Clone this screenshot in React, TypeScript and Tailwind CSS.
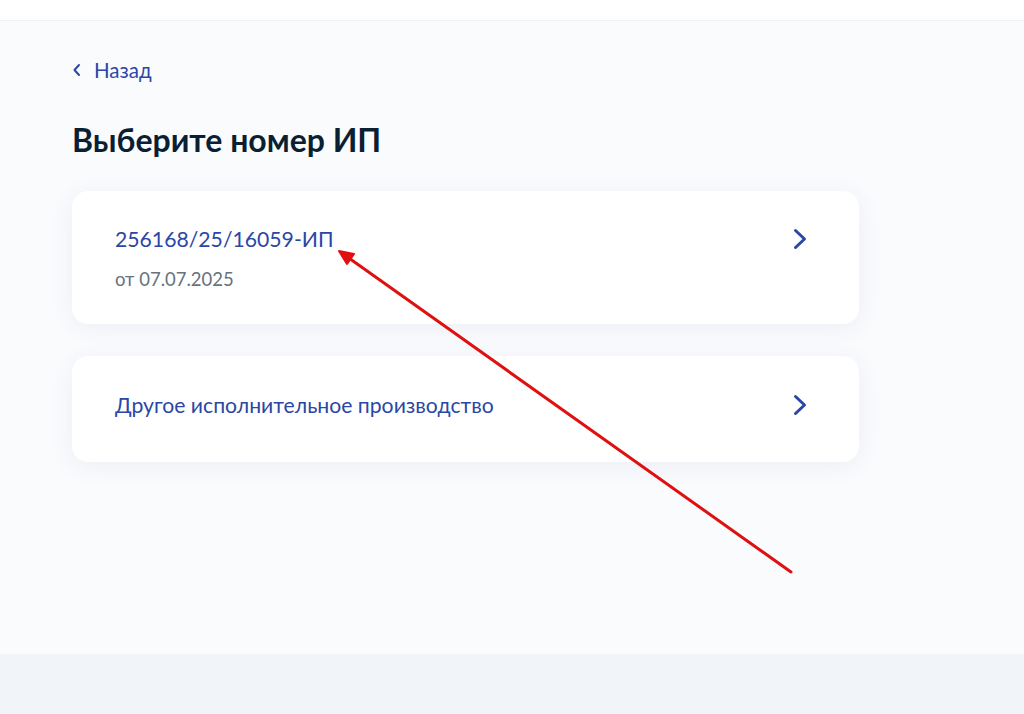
import React from 'react';

const ChevronRight = () => (
  <svg width="24" height="24" viewBox="0 0 24 24" fill="none">
    <path d="M7.5 3.5L16.5 12l-9 8.5" stroke="#2a47a6" strokeWidth="3" strokeLinecap="round" strokeLinejoin="round" />
  </svg>
);

const ChevronLeft = () => (
  <svg width="10" height="14" viewBox="0 0 10 14" fill="none">
    <path d="M7 2L2.5 7 7 12" stroke="#2a47a6" strokeWidth="2" strokeLinecap="round" strokeLinejoin="round" />
  </svg>
);

// Red annotation arrow drawn over the page
const Annotation = () => (
  <svg className="absolute inset-0 pointer-events-none" width="1024" height="714" viewBox="0 0 1024 714">
    <line x1="791" y1="572" x2="346" y2="256" stroke="#e01010" strokeWidth="3" strokeLinecap="round" />
    <path d="M339 251 L354 254 L347 264 Z" fill="#e01010" stroke="#e01010" strokeWidth="2" strokeLinejoin="round" />
  </svg>
);

export default function App() {
  return (
    <div className="relative w-[1024px] h-[714px] overflow-hidden flex flex-col bg-[#fafbfd]" style={{ fontFamily: 'Lato, "Open Sans", sans-serif' }}>
      <header className="h-[21px] bg-white border-b border-[#eef1f5] shrink-0" />

      <main className="flex-1 pl-[72px] pt-[35px]">
        <a className="flex items-center gap-[12px] h-[28px] text-[20.5px] text-[#2a47a6]">
          <ChevronLeft />
          <span>Назад</span>
        </a>

        <h1 className="mt-[37px] text-[32px] leading-[38px] font-bold text-[#0b1f33]">Выберите номер ИП</h1>

        <div className="mt-[32px] w-[787px] flex flex-col gap-[32px]">
          <div className="bg-white rounded-[16px] shadow-[0_4px_24px_rgba(40,70,140,0.07)] pl-[43px] pr-[47px] pt-[34px] pb-[31px] flex justify-between items-start">
            <div>
              <div className="text-[21.2px] leading-[28px] text-[#2a47a6]">256168/25/16059-ИП</div>
              <div className="mt-[12px] text-[18.5px] leading-[28px] text-[#66727f]">от 07.07.2025</div>
            </div>
            <div className="mt-[2px]"><ChevronRight /></div>
          </div>

          <div className="bg-white rounded-[16px] shadow-[0_4px_24px_rgba(40,70,140,0.07)] pl-[43px] pr-[47px] pt-[35px] pb-[43px] flex justify-between items-center">
            <div className="text-[21.2px] leading-[28px] text-[#2a47a6]">Другое исполнительное производство</div>
            <ChevronRight />
          </div>
        </div>
      </main>

      <footer className="h-[60px] bg-[#f1f4f8] shrink-0" />

      <Annotation />
    </div>
  );
}
